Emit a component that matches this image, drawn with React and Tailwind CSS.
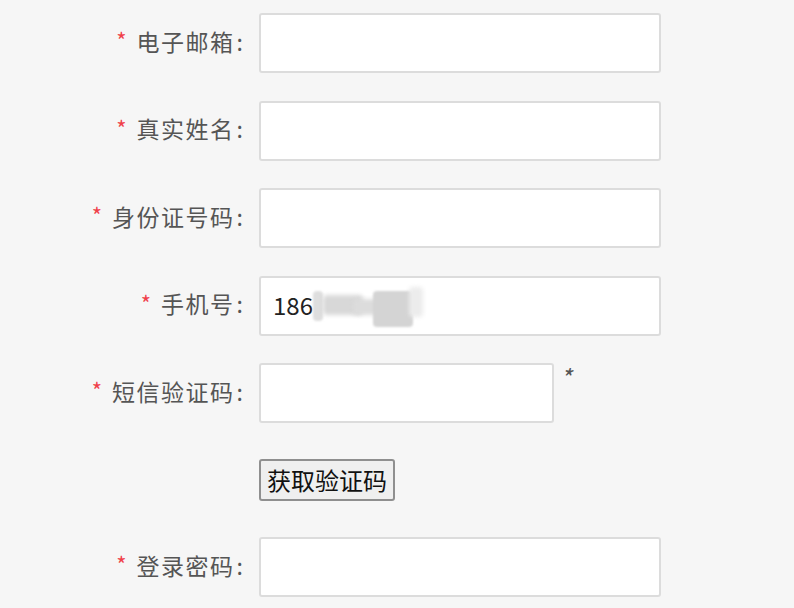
import React from "react";

const font = { fontFamily: '"Noto Sans CJK SC", "Noto Sans", sans-serif' };

function Label({ text }) {
  return (
    <div className="w-[245px] shrink-0 flex justify-end items-center text-[23px] text-[#555] leading-none pr-[2px] relative top-[-2px]">
      <span className="text-[#f0414a] mr-[10px] text-[22px] relative top-[-2px]">*</span>
      <span className="tracking-[1.5px]">{text}</span>
      <span className="ml-[2px]">:</span>
    </div>
  );
}

function Field({ label, children, width = "w-[402px]", extra }) {
  return (
    <div className="flex items-center h-[60px]">
      <Label text={label} />
      <div
        className={`${width} h-[60px] ml-[14px] bg-white border-2 border-[#dcdcdc] rounded-[3px] flex items-center px-[12px] text-[24px] text-[#222]`}
      >
        {children}
      </div>
      {extra}
    </div>
  );
}

export default function App() {
  return (
    <main className="min-h-[608px] w-[794px] bg-[#f6f6f6] pt-[13px]" style={font}>
      <div className="flex flex-col gap-[27.5px]">
        <Field label="电子邮箱" />
        <Field label="真实姓名" />
        <Field label="身份证号码" />
        <Field label="手机号">
          <span className="relative top-[-1px]">186</span>
          {/* blurred part of the number */}
          <span className="flex items-center relative h-[50px] w-[112px]">
            <span className="absolute left-[0px] top-[10px] w-[10px] h-[30px] bg-[#dedede] rounded-sm blur-[1px]" />
            <span className="absolute left-[10px] top-[14px] w-[40px] h-[20px] bg-[#d8d8d8] rounded-sm blur-[2px]" />
            <span className="absolute left-[40px] top-[18px] w-[30px] h-[16px] bg-[#dcdcdc] rounded-sm blur-[2px]" />
            <span className="absolute left-[60px] top-[10px] w-[40px] h-[36px] bg-[#d4d4d4] rounded-sm blur-[1px]" />
            <span className="absolute left-[96px] top-[6px] w-[14px] h-[30px] bg-[#ececec] rounded-sm blur-[2px]" />
          </span>
        </Field>
        <Field
          label="短信验证码"
          width="w-[295px]"
          extra={<span className="self-start ml-[6px] mt-[2px] text-[24px] text-[#555] italic leading-none">*</span>}
        />
      </div>
      <div className="ml-[259px] mt-[36px]">
        <button
          type="button"
          className="h-[42px] w-[136px] bg-[#efefef] border-2 border-[#8f8f8f] rounded-[3px] text-[24px] text-[#111] leading-none"
        >
          获取验证码
        </button>
      </div>
      <div className="mt-[36px]">
        <Field label="登录密码" />
      </div>
    </main>
  );
}
